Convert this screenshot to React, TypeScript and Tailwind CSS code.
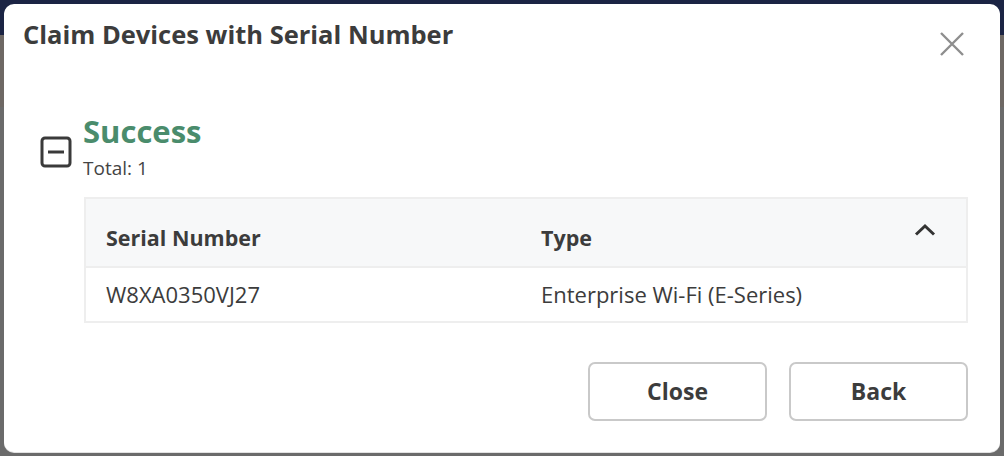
import React from "react";

const font = { fontFamily: '"Open Sans", "Liberation Sans", sans-serif' };

const devices = [{ serial: "W8XA0350VJ27", type: "Enterprise Wi-Fi (E-Series)" }];

const CloseIcon = () => (
	<svg width="26" height="26" viewBox="0 0 26 26" fill="none">
		<path d="M2 2 L24 24 M24 2 L2 24" stroke="#8e8e8e" strokeWidth="2.4" />
	</svg>
);

const MinusBox = () => (
	<svg width="32" height="32" viewBox="0 0 32 32" fill="none">
		<rect x="2" y="2" width="28" height="28" rx="3" stroke="#3a3a3a" strokeWidth="3" />
		<path d="M8 16 H24" stroke="#3a3a3a" strokeWidth="3" />
	</svg>
);

const ChevronUp = () => (
	<svg width="22" height="14" viewBox="0 0 22 14" fill="none">
		<path d="M2 11.5 L11 3 L20 11.5" stroke="#333" strokeWidth="3" />
	</svg>
);

export default function App() {
	return (
		<div
			className="w-[1004px] h-[456px] p-[4px] bg-[linear-gradient(to_bottom,#1b2444_0,#1b2444_35px,#6e6864_35px,#6e6864_107px,#6b6b6b_107px)]"
			style={font}
		>
			<div className="h-[448px] bg-white rounded-[10px] shadow-[0_1px_0_#e2e2e2] flex flex-col text-[#3c3c3c]">
				{/* Header */}
				<div className="flex items-start justify-between pl-[19px] pr-[35px] pt-[15px]">
					<h2 className="text-[25.5px] leading-[30px] font-bold">
						Claim Devices with Serial Number
					</h2>
					<button type="button" className="mt-[12px]">
						<CloseIcon />
					</button>
				</div>

				{/* Body */}
				<div className="flex-1 pl-[36px] pr-[32px] pt-[56px]">
					<div className="flex items-center gap-[11px]">
						<span className="mt-[10px]">
							<MinusBox />
						</span>
						<div>
							<p className="text-[31px] leading-[36px] font-bold text-[#4a8c6c]">
								Success
							</p>
							<p className="text-[19px] leading-[24px] mt-[7px] text-[#444]">
								Total: {devices.length}
							</p>
						</div>
					</div>

					<div className="ml-[44px] mt-[17px] border-2 border-[#eeeeee]">
						<div className="grid grid-cols-[435px_1fr_auto] items-center h-[67px] bg-[#f7f8f9] pl-[20px] pr-[30px]">
							<span className="text-[21.5px] font-bold pt-[11px]">Serial Number</span>
							<span className="text-[21.5px] font-bold pt-[11px]">Type</span>
							<span className="pb-[5px]">
								<ChevronUp />
							</span>
						</div>
						{devices.map((d) => (
							<div
								key={d.serial}
								className="grid grid-cols-[435px_1fr] items-center h-[55px] border-t-2 border-[#eeeeee] pl-[20px]"
							>
								<span className="text-[22px]">{d.serial}</span>
								<span className="text-[22px]">{d.type}</span>
							</div>
						))}
					</div>

					<div className="flex justify-end gap-[22px] mt-[39px]">
						<button
							type="button"
							className="w-[179px] h-[59px] rounded-[7px] border-2 border-[#c9c9c9] text-[23px] font-bold"
						>
							Close
						</button>
						<button
							type="button"
							className="w-[179px] h-[59px] rounded-[7px] border-2 border-[#c9c9c9] text-[23px] font-bold"
						>
							Back
						</button>
					</div>
				</div>
			</div>
		</div>
	);
}
